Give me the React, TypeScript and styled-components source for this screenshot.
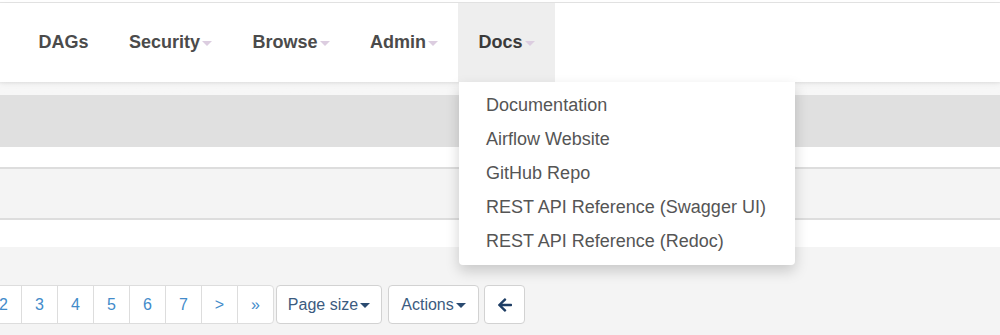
import * as React from 'react';
import styled, { createGlobalStyle } from 'styled-components';
import { FaArrowLeft } from 'react-icons/fa';

const GlobalStyle = createGlobalStyle`
  html, body {
    margin: 0;
    padding: 0;
    background: #f4f4f4;
    font-family: "Liberation Sans", Arial, Helvetica, sans-serif;
    overflow: hidden;
  }
`;

const Page = styled.div`
  width: 1000px;
  height: 335px;
  background: #f4f4f4;
  overflow: hidden;
`;

const TopStrip = styled.div`
  height: 2px;
  background: #fff;
  border-bottom: 1px solid #e4e4e4;
`;

const Navbar = styled.nav`
  position: relative;
  z-index: 3;
  height: 79px;
  background: #fff;
  box-shadow: 0 2px 6px rgba(0, 0, 0, 0.06);
  display: flex;
  padding-left: 18px;
`;

const NavItem = styled.div<{ $open?: boolean }>`
  position: relative;
  display: flex;
  align-items: center;
  padding: 0 20px 0 20.5px;
  font-size: 18px;
  font-weight: bold;
  color: ${(p) => (p.$open ? '#3a3a3a' : '#4b4b4b')};
  background: ${(p) => (p.$open ? '#eeeeee' : 'transparent')};
`;

const Caret = styled.span<{ $color?: string }>`
  display: inline-block;
  width: 0;
  height: 0;
  margin-left: 2px;
  margin-top: 2px;
  border-top: 5px solid ${(p) => p.$color || '#dccde0'};
  border-left: 5px solid transparent;
  border-right: 5px solid transparent;
`;

const Dropdown = styled.ul`
  position: absolute;
  top: 79px;
  left: 1px;
  width: 336px;
  margin: 0;
  padding: 6px 0 7px;
  list-style: none;
  background: #fff;
  border-radius: 0 0 4px 4px;
  box-shadow: 0 6px 14px rgba(0, 0, 0, 0.18);
`;

const DropItem = styled.li`
  height: 34px;
  line-height: 34px;
  padding-left: 27px;
  font-size: 18px;
  font-weight: normal;
  color: #555;
  white-space: nowrap;
`;

const Content = styled.main`
  padding-top: 13px;
  background: linear-gradient(#ededed, #f7f7f7 3px, #f6f6f6);
`;

const Table = styled.div`
  display: flex;
  flex-direction: column;
`;

const Band = styled.div<{ $h: number; $bg: string; $line?: boolean }>`
  height: ${(p) => p.$h}px;
  background: ${(p) => p.$bg};
  border-top: ${(p) => (p.$line ? '2px solid #dddddd' : 'none')};
`;

const Footer = styled.div`
  background: #f4f4f4;
  padding-top: 38px;
  display: flex;
  align-items: center;
`;

const Pager = styled.ul`
  display: flex;
  margin: 0 0 0 -14px;
  padding: 0;
  list-style: none;
`;

const PageCell = styled.li<{ $last?: boolean }>`
  box-sizing: border-box;
  width: 37px;
  height: 39px;
  margin-left: -1px;
  display: flex;
  align-items: center;
  justify-content: center;
  background: #fff;
  border: 1px solid #dddddd;
  border-radius: ${(p) => (p.$last ? '0 4px 4px 0' : '0')};
  font-size: 16px;
  color: #428bca;
`;

const Button = styled.div<{ $w: number; $gap: number }>`
  box-sizing: border-box;
  width: ${(p) => p.$w}px;
  height: 39px;
  margin-left: ${(p) => p.$gap}px;
  display: flex;
  align-items: center;
  justify-content: center;
  background: #fff;
  border: 1px solid #d2d2d2;
  border-radius: 4px;
  font-size: 16px;
  color: #3b5b80;
  svg {
    color: #1e3d64;
  }
`;

const pages = ['2', '3', '4', '5', '6', '7', '>', '»'];

const docs = [
  'Documentation',
  'Airflow Website',
  'GitHub Repo',
  'REST API Reference (Swagger UI)',
  'REST API Reference (Redoc)',
];

export default function App() {
  return (
    <Page>
      <GlobalStyle />
      <TopStrip />
      <Navbar>
        <NavItem>DAGs</NavItem>
        <NavItem>
          Security
          <Caret />
        </NavItem>
        <NavItem>
          Browse
          <Caret />
        </NavItem>
        <NavItem>
          Admin
          <Caret />
        </NavItem>
        <NavItem $open>
          Docs
          <Caret />
          <Dropdown>
            {docs.map((d) => (
              <DropItem key={d}>{d}</DropItem>
            ))}
          </Dropdown>
        </NavItem>
      </Navbar>
      <Content>
        <Table>
          <Band $h={52} $bg="#e0e0e0" />
          <Band $h={20} $bg="#ffffff" />
          <Band $h={49} $bg="#f4f4f4" $line />
          <Band $h={27} $bg="#ffffff" $line />
        </Table>
        <Footer>
          <Pager>
            {pages.map((p, i) => (
              <PageCell key={p} $last={i === pages.length - 1}>
                {p}
              </PageCell>
            ))}
          </Pager>
          <Button $w={106} $gap={2}>
            Page size
            <Caret $color="#2a4a70" />
          </Button>
          <Button $w={91} $gap={6}>
            Actions
            <Caret $color="#2a4a70" />
          </Button>
          <Button $w={41} $gap={5}>
            <FaArrowLeft size={16} />
          </Button>
        </Footer>
      </Content>
    </Page>
  );
}
